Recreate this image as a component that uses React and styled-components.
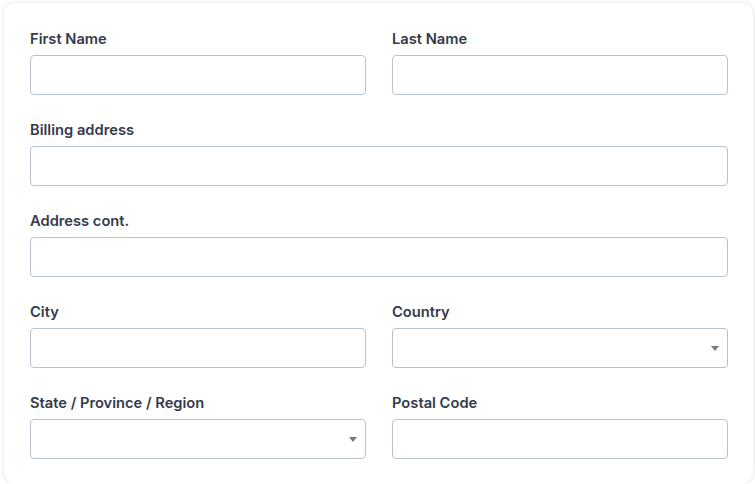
import React from 'react'
import styled, { createGlobalStyle } from 'styled-components'

const GlobalStyle = createGlobalStyle`
  body {
    margin: 0;
    background: #ffffff;
    font-family: Inter, "Noto Sans", sans-serif;
  }
`

const rows = [
  [{ label: 'First Name' }, { label: 'Last Name' }],
  [{ label: 'Billing address' }],
  [{ label: 'Address cont.' }],
  [{ label: 'City' }, { label: 'Country', select: true }],
  [{ label: 'State / Province / Region', select: true }, { label: 'Postal Code' }],
]

function App() {
  return (
    <>
      <GlobalStyle />
      <Page>
        <Card>
          {rows.map((row, i) => (
            <Row key={i} $cols={row.length}>
              {row.map((field) => (
                <Field key={field.label}>
                  <Label>{field.label}</Label>
                  {field.select ? (
                    <SelectBox>
                      <Caret />
                    </SelectBox>
                  ) : (
                    <Input type="text" />
                  )}
                </Field>
              ))}
            </Row>
          ))}
        </Card>
      </Page>
    </>
  )
}

export default App

const Page = styled.div`
  padding: 3px 2px 0 4px;
`
const Card = styled.div`
  background: #fff;
  border-radius: 10px;
  box-shadow: 0 0 4px rgba(0, 0, 0, 0.14);
  padding: 25px 25px 24px 26px;
  display: flex;
  flex-direction: column;
  gap: 24px;
  min-height: 480px;
  box-sizing: border-box;
`
const Row = styled.div`
  display: grid;
  grid-template-columns: ${(p) => (p.$cols === 2 ? '1fr 1fr' : '1fr')};
  column-gap: 26px;
`
const Field = styled.div`
  display: flex;
  flex-direction: column;
`
const Label = styled.label`
  font-size: 14.7px;
  font-weight: 600;
  line-height: 22px;
  color: #343a4a;
  margin-bottom: 5px;
`
const Input = styled.input`
  height: 40px;
  box-sizing: border-box;
  border: 1px solid #b7c4cf;
  border-radius: 4px;
  background: #fff;
  outline: none;
  padding: 0 12px;
  font: inherit;
`
const SelectBox = styled.div`
  position: relative;
  height: 40px;
  box-sizing: border-box;
  border: 1px solid #b7c4cf;
  border-radius: 4px;
  background: #fff;
`
const Caret = styled.span`
  position: absolute;
  right: 8px;
  top: 17px;
  width: 0;
  height: 0;
  border-left: 4px solid transparent;
  border-right: 4px solid transparent;
  border-top: 5px solid #7a7a7a;
`
